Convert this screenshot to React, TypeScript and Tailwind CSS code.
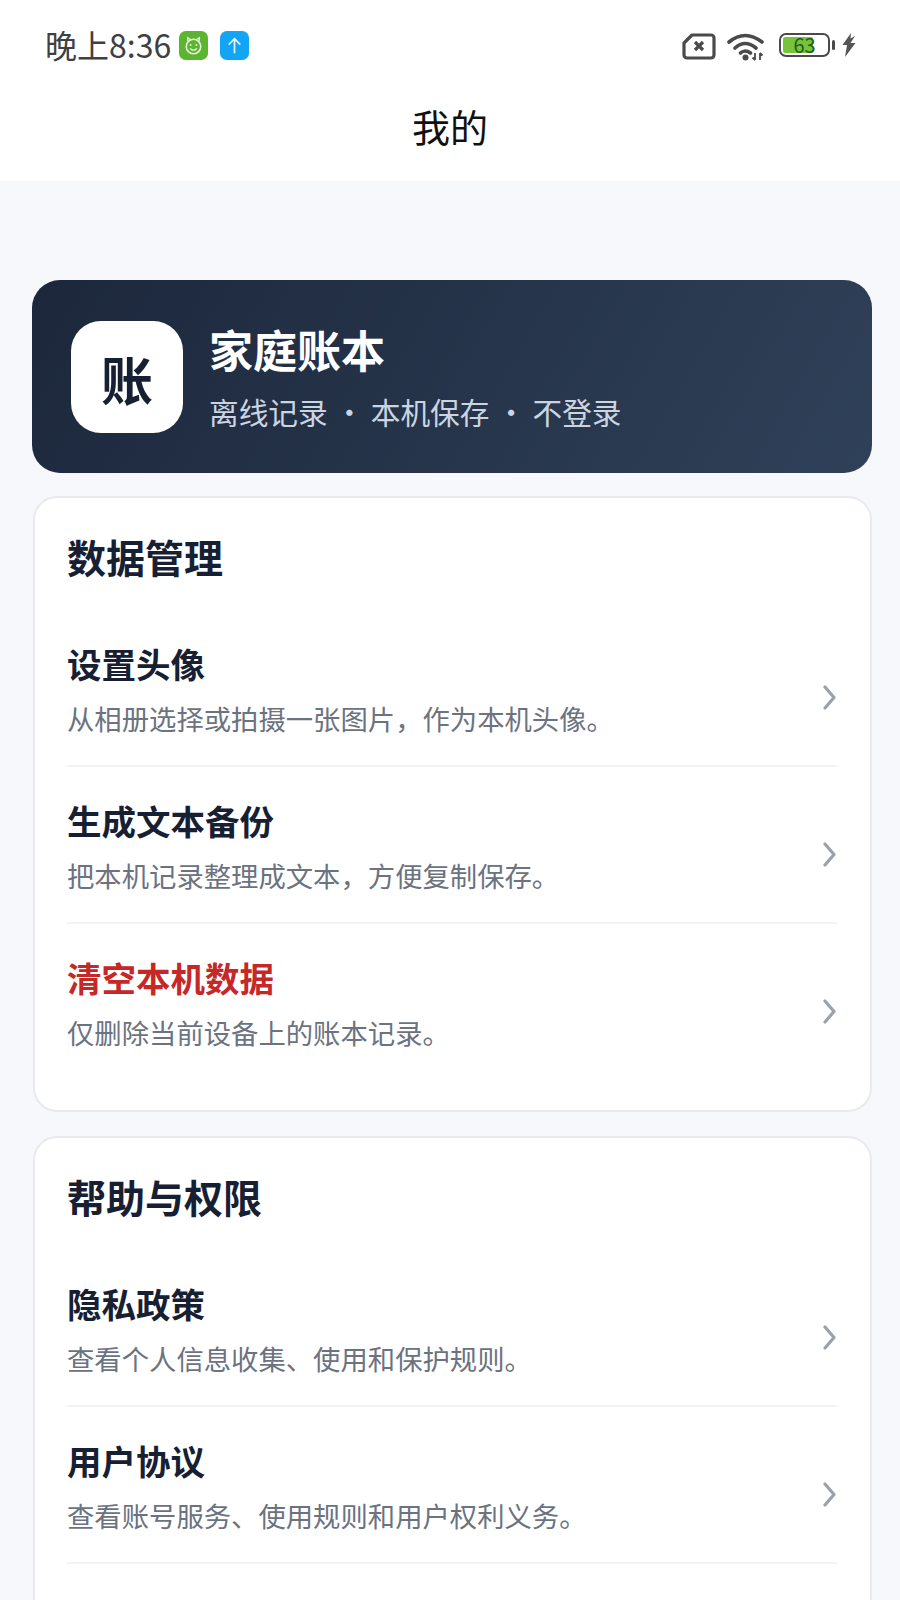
const font = '"Noto Sans CJK SC", "Noto Sans", sans-serif';

function Chevron() {
  return (
    <svg width="13" height="25" viewBox="0 0 13 25" fill="none" className="mt-[18px] mr-[1px] shrink-0">
      <path d="M2 2 L11 12.5 L2 23" stroke="#9aa1ab" strokeWidth="3.2" strokeLinecap="round" strokeLinejoin="round" />
    </svg>
  );
}

function Row({ title, sub, red, last }: { title: string; sub: string; red?: boolean; last?: boolean }) {
  return (
    <div className={`flex items-center justify-between pt-[29px] pb-[27px] ${last ? '' : 'border-b-2 border-[#f1f3f6]'}`}>
      <div>
        <div className={`text-[34.5px] leading-[48px] font-bold ${red ? 'text-[#c62828]' : 'text-[#172033]'}`}>{title}</div>
        <div className="mt-[11px] text-[27.35px] leading-[40px] text-[#6b7280]">{sub}</div>
      </div>
      <Chevron />
    </div>
  );
}

function Card({ title, children }: { title: string; children: React.ReactNode }) {
  return (
    <section className="rounded-[24px] border-2 border-[#e8eaee] bg-white pt-[31px] pr-[33px] pb-[31px] pl-[32px]">
      <h2 className="mb-[27px] text-[39px] leading-[54px] font-bold text-[#172033]">{title}</h2>
      {children}
    </section>
  );
}

export default function App() {
  return (
    <div className="h-[1600px] w-[900px] overflow-hidden bg-[#f6f8fc]" style={{ fontFamily: font }}>
      <div className="bg-white">
        <div className="flex h-[90px] items-center justify-between pr-[44px] pl-[45px]">
          <div className="flex items-center">
            <span className="-mt-[3px] text-[32px] leading-none text-[#404040]">晚上8:36</span>
            <svg width="29" height="29" viewBox="0 0 30 30" className="ml-[8px]">
              <rect width="30" height="30" rx="7" fill="#5cb531" />
              <circle cx="15" cy="16" r="7.5" fill="none" stroke="#e6f5dc" strokeWidth="1.6" />
              <path d="M9 10 L9 7 L12 9 M21 10 L21 7 L18 9" fill="none" stroke="#e6f5dc" strokeWidth="1.4" />
              <path d="M11.5 18 Q15 21.5 18.5 18" fill="none" stroke="#e6f5dc" strokeWidth="1.4" />
              <circle cx="12" cy="14.5" r="1" fill="#e6f5dc" />
              <circle cx="18" cy="14.5" r="1" fill="#e6f5dc" />
            </svg>
            <svg width="29" height="29" viewBox="0 0 30 30" className="ml-[12px]">
              <rect width="30" height="30" rx="7" fill="#12a5f4" />
              <path d="M15 23 V8 M9 14 L15 8 L21 14" fill="none" stroke="#e6f6ff" strokeWidth="1.8" />
            </svg>
          </div>
          <div className="flex items-center">
            <svg width="34" height="27" viewBox="0 0 34 27" className="mt-[2px]">
              <path d="M10 2 H29 a3 3 0 0 1 3 3 V22 a3 3 0 0 1 -3 3 H5 a3 3 0 0 1 -3 -3 V10 Z" fill="none" stroke="#4a4a4a" strokeWidth="3.2" strokeLinejoin="round" />
              <path d="M13 9 L21 17 M21 9 L13 17" stroke="#4a4a4a" strokeWidth="3.2" />
            </svg>
            <svg width="39" height="29" viewBox="0 0 39 29" className="mt-[2px] ml-[11px]">
              <path d="M2 10 Q18 -3 35 10 M8 16 Q18 7 29 16 M13.5 21 Q18 17 23.5 21" fill="none" stroke="#4a4a4a" strokeWidth="3.6" strokeLinecap="round" />
              <circle cx="18.5" cy="25.5" r="3" fill="#4a4a4a" />
              <path d="M28 21 V28 M25.5 25.5 L28 28 M33 28 V21 M33 21 L35.5 23.5" fill="none" stroke="#4a4a4a" strokeWidth="1.8" />
            </svg>
            <div className="relative ml-[13px] flex h-[24px] w-[51px] items-center rounded-[7px] border-2 border-[#4a4a4a] p-[2px]">
              <div className="h-full w-[70%] rounded-[2px] bg-[#76c43a]" />
              <span className="absolute inset-0 flex items-center justify-center text-[20px] leading-none text-[#2b5a1a]">63</span>
            </div>
            <div className="ml-[2px] h-[10px] w-[3px] rounded-full bg-[#4a4a4a]" />
            <svg width="14" height="24" viewBox="0 0 14 24" className="ml-[7px]">
              <path d="M9 0 L0.5 12 H5 L3 24 L13.5 10 H8.5 L13 3 L8.5 5.5 Z" fill="#555555" />
            </svg>
          </div>
        </div>
        <div className="flex h-[91px] items-start justify-center pt-[9px] text-[38px] leading-[54px] text-[#111111]">我的</div>
      </div>
      <div className="flex flex-col pt-[99px] pr-[28px] pl-[33px]">
        <div className="mb-[23px] -ml-[1px] flex h-[193px] items-center rounded-[28px] bg-[linear-gradient(120deg,#1c273b,#2f4159)] pl-[39px]">
          <div className="flex h-[112px] w-[112px] items-center justify-center rounded-[30px] bg-white text-[52px] leading-[60px] font-bold text-[#172033]">
            <span className="mt-[4px]">账</span>
          </div>
          <div className="ml-[26px]">
            <div className="-mt-[2px] text-[44px] leading-[60px] font-bold text-white">家庭账本</div>
            <div className="mt-[12px] text-[29.7px] leading-[42px] whitespace-pre text-[#cbd5e1]">离线记录 · 本机保存 · 不登录</div>
          </div>
        </div>
        <Card title="数据管理">
          <Row title="设置头像" sub="从相册选择或拍摄一张图片，作为本机头像。" />
          <Row title="生成文本备份" sub="把本机记录整理成文本，方便复制保存。" />
          <Row title="清空本机数据" sub="仅删除当前设备上的账本记录。" red last />
        </Card>
        <div className="h-[24px] shrink-0" />
        <Card title="帮助与权限">
          <Row title="隐私政策" sub="查看个人信息收集、使用和保护规则。" />
          <Row title="用户协议" sub="查看账号服务、使用规则和用户权利义务。" />
          <div className="h-[120px]" />
        </Card>
      </div>
    </div>
  );
}
